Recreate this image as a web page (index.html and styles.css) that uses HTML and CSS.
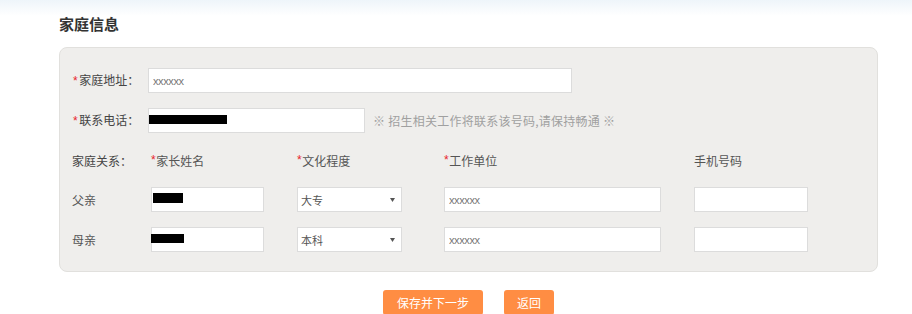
FILE: index.html
```html
<!DOCTYPE html>
<html lang="zh-CN">
<head>
<meta charset="utf-8">
<title>家庭信息</title>
<link rel="stylesheet" href="styles.css">
</head>
<body>
<div class="page">
  <h2 class="title">家庭信息</h2>
  <div class="panel">
    <div class="row">
      <label class="row-label"><span class="req">*</span>家庭地址：</label>
      <input class="field field-address" type="text" value="xxxxxx">
    </div>
    <div class="row">
      <label class="row-label"><span class="req">*</span>联系电话：</label>
      <div class="wrap">
        <input class="field field-phone" type="text" value="">
        <span class="redact redact-phone"></span>
      </div>
      <span class="hint">※ 招生相关工作将联系该号码,请保持畅通 ※</span>
    </div>
    <div class="family">
      <div class="cell head-label">家庭关系：</div>
      <div class="cell head"><span class="req">*</span>家长姓名</div>
      <div class="cell head"><span class="req">*</span>文化程度</div>
      <div class="cell head"><span class="req">*</span>工作单位</div>
      <div class="cell head">手机号码</div>

      <div class="cell rel">父亲</div>
      <div class="cell"><div class="wrap"><input class="field field-name" type="text" value=""><span class="redact redact-father"></span></div></div>
      <div class="cell"><div class="sel"><select class="select"><option>大专</option><option>本科</option></select><svg class="arrow" viewBox="0 0 5 4" width="5" height="4"><polygon points="0,0 5,0 2.5,4" fill="#555"/></svg></div></div>
      <div class="cell"><input class="field field-work" type="text" value="xxxxxx"></div>
      <div class="cell"><input class="field field-mobile" type="text" value=""></div>

      <div class="cell rel">母亲</div>
      <div class="cell"><div class="wrap"><input class="field field-name" type="text" value=""><span class="redact redact-mother"></span></div></div>
      <div class="cell"><div class="sel"><select class="select"><option>本科</option><option>大专</option></select><svg class="arrow" viewBox="0 0 5 4" width="5" height="4"><polygon points="0,0 5,0 2.5,4" fill="#555"/></svg></div></div>
      <div class="cell"><input class="field field-work" type="text" value="xxxxxx"></div>
      <div class="cell"><input class="field field-mobile" type="text" value=""></div>
    </div>
  </div>
  <div class="actions">
    <button class="btn btn-save" type="button">保存并下一步</button>
    <button class="btn btn-back" type="button">返回</button>
  </div>
</div>
</body>
</html>
```

FILE: styles.css
```css
html, body {
  margin: 0;
  padding: 0;
}
body {
  background: linear-gradient(to bottom, #eef5fa 0, #ffffff 16px) no-repeat;
  background-color: #fff;
  font-family: "Noto Sans CJK SC", "Liberation Sans", sans-serif;
  color: #444;
  height: 314px;
  overflow: hidden;
}
.page {
  padding: 14px 0 0 59px;
  width: 819px;
}
.title {
  margin: 0 0 13px 0;
  font-size: 15px;
  line-height: 20px;
  font-weight: bold;
  color: #333;
}
.panel {
  box-sizing: border-box;
  width: 819px;
  background: #efeeec;
  border: 1px solid #e1e0dd;
  border-radius: 8px;
  padding: 20px 0 19px 12px;
}
.row {
  display: flex;
  align-items: center;
  height: 25px;
  margin-bottom: 15px;
}
.row-label {
  box-sizing: border-box;
  width: 76px;
  padding-left: 1px;
  font-size: 12px;
  line-height: 25px;
  color: #444;
  white-space: nowrap;
}
.req {
  color: #e8242b;
  font-family: "Liberation Sans", sans-serif;
  font-size: 12px;
  margin-right: 0.5px;
}
.row-label .req {
  margin-right: 1.5px;
}
.field {
  box-sizing: border-box;
  height: 25px;
  margin: 0;
  border: 1px solid #dcdcdc;
  background: #fff;
  padding: 0 4px;
  font-family: "Liberation Sans", sans-serif;
  font-size: 11px;
  letter-spacing: -0.4px;
  color: #777;
  outline: none;
  display: block;
}
.field-address { width: 424px; }
.field-phone { width: 217px; }
.field-name { width: 113px; }
.field-work { width: 217px; }
.field-mobile { width: 114px; }
.wrap {
  position: relative;
}
.redact {
  position: absolute;
  background: #000;
}
.redact-phone { left: 1px; top: 7px; width: 78px; height: 9px; }
.redact-father { left: 2px; top: 6px; width: 30px; height: 10px; }
.redact-mother { left: 0; top: 7px; width: 33px; height: 9px; }
.hint {
  margin-left: 8px;
  font-size: 12px;
  letter-spacing: 0.25px;
  line-height: 25px;
  color: #a0a0a0;
  white-space: nowrap;
}
.family {
  display: grid;
  grid-template-columns: 79px 146px 147px 250px 114px;
  grid-template-rows: 24px 25px 25px;
  row-gap: 15px;
}
.cell {
  display: flex;
  align-items: center;
  font-size: 12px;
  white-space: nowrap;
}
.head-label {
  color: #444;
}
.head {
  color: #555;
}
.rel {
  color: #555;
}
.sel {
  position: relative;
  width: 105px;
  height: 25px;
}
.select {
  -webkit-appearance: none;
  appearance: none;
  box-sizing: border-box;
  width: 105px;
  height: 25px;
  margin: 0;
  border: 1px solid #dcdcdc;
  border-radius: 0;
  background: #fff;
  padding: 0 0 0 3px;
  font-family: "Noto Sans CJK SC", sans-serif;
  font-size: 11px;
  color: #555;
  outline: none;
}
.arrow {
  position: absolute;
  right: 7px;
  top: 10.5px;
  pointer-events: none;
}
.actions {
  display: flex;
  justify-content: center;
  gap: 21px;
  margin-top: 18px;
  width: 819px;
}
.btn {
  box-sizing: border-box;
  height: 25px;
  border: none;
  border-radius: 3px;
  background: #ff8d43;
  color: #fff;
  font-family: "Noto Sans CJK SC", sans-serif;
  font-size: 12px;
  padding: 0;
  cursor: pointer;
}
.btn-save { width: 100px; }
.btn-back { width: 50px; }
```
